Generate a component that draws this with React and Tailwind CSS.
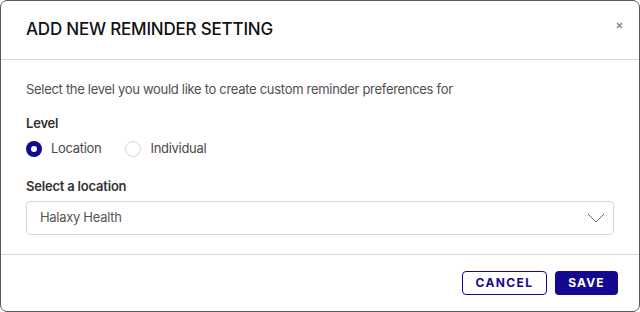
const NAVY = "#13088f";

const Radio = ({ checked, label }) => (
  <label className="flex items-center gap-[9px] text-[13px] tracking-[-0.3px] text-[#4a4a4a]">
    {checked ? (
      <span className="flex h-[16px] w-[16px] items-center justify-center rounded-full bg-[#13088f]">
        <span className="h-[6px] w-[6px] rounded-full bg-white" />
      </span>
    ) : (
      <span className="h-[16px] w-[16px] rounded-full border border-[#d4d6dc] bg-white" />
    )}
    {label}
  </label>
);

export default function App() {
  return (
    <div
      className="h-[312px] w-[640px] overflow-hidden rounded-[7px] border border-[#5a5a5a] bg-white"
      style={{ fontFamily: "Inter, 'Liberation Sans', sans-serif" }}
    >
      {/* header */}
      <div className="flex h-[59px] items-center justify-between border-b border-[#d3d5db] pl-[25px] pr-[16px]">
        <h2 className="text-[17px] font-medium tracking-[-0.2px] text-[#111]">ADD NEW REMINDER SETTING</h2>
        <button className="mb-[10px] text-[#8a8a8a]">
          <svg width="7" height="7" viewBox="0 0 7 7">
            <path d="M1 1L6 6M6 1L1 6" stroke="currentColor" strokeWidth="1.5" />
          </svg>
        </button>
      </div>

      {/* body */}
      <div className="flex h-[195px] flex-col border-b border-[#d3d5db] px-[25px] pt-[20px]">
        <p className="text-[13px] leading-[18px] tracking-[-0.3px] text-[#4f4f4f]">
          Select the level you would like to create custom reminder preferences for
        </p>
        <p className="mt-[16px] text-[13px] font-semibold leading-[18px] tracking-[-0.2px] text-[#333]">Level</p>
        <div className="mt-[7px] flex items-center gap-[24px]">
          <Radio checked label="Location" />
          <Radio label="Individual" />
        </div>
        <p className="mt-[18px] text-[13px] font-semibold leading-[18px] tracking-[-0.2px] text-[#333]">
          Select a location
        </p>
        <div className="mt-[6px] flex h-[34px] w-[588px] items-center justify-between rounded-[4px] border border-[#d6d8de] pl-[13px] pr-[8px]">
          <span className="text-[13px] tracking-[-0.3px] text-[#555]">Halaxy Health</span>
          <svg width="18" height="10" viewBox="0 0 18 10" className="text-[#666]">
            <path d="M1 1L9 9L17 1" fill="none" stroke="currentColor" strokeWidth="1" />
          </svg>
        </div>
      </div>

      {/* footer */}
      <div className="flex justify-end gap-[8px] pr-[21px] pt-[16px]">
        <button
          className="flex h-[24px] w-[85px] items-center justify-center rounded-[4px] border text-[12px] font-bold tracking-[1.4px]"
          style={{ borderColor: NAVY, color: NAVY }}
        >
          CANCEL
        </button>
        <button className="flex h-[24px] w-[63px] items-center justify-center rounded-[4px] bg-[#13088f] text-[12px] font-bold tracking-[1.2px] text-white">
          SAVE
        </button>
      </div>
    </div>
  );
}
